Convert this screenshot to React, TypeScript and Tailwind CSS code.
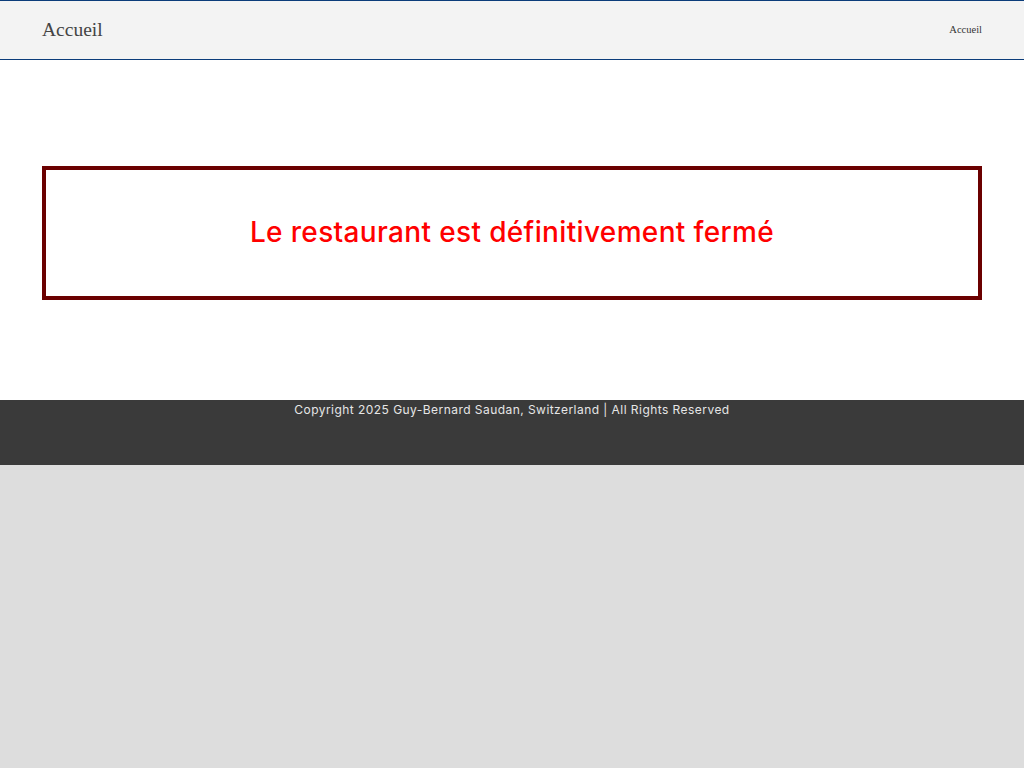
export default function App() {
  return (
    <div className="min-h-screen bg-[#dddddd]">
      <header className="h-[60px] bg-[#f3f3f3] border-t border-b border-[#0b3c7a] flex items-center justify-between px-[42px]">
        <div className="text-[19.5px] text-[#444] font-['Liberation_Serif',serif]">Accueil</div>
        <nav className="text-[10.5px] text-[#333] font-['Liberation_Serif',serif]">Accueil</nav>
      </header>
      <main className="bg-white h-[340px] pt-[106px] px-[42px]">
        <div className="h-[134px] border-4 border-[#6b0000] flex items-center justify-center">
          <h1 className="text-[28px] text-[#ff0000] font-['Inter',sans-serif] font-medium tracking-[0.35px] pb-[2px]">
            Le restaurant est définitivement fermé
          </h1>
        </div>
      </main>
      <footer className="h-[65px] bg-[#3a3a3a] flex justify-center">
        <p className="text-[12px] text-[#e6e6e6] font-['Inter',sans-serif] tracking-[0.45px] leading-[20px]">
          Copyright 2025 Guy-Bernard Saudan, Switzerland | All Rights Reserved
        </p>
      </footer>
    </div>
  );
}
